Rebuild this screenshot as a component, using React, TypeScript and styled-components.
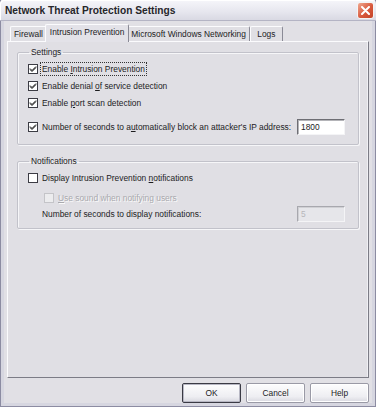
import React from 'react';
import styled, { createGlobalStyle } from 'styled-components';

const GlobalStyle = createGlobalStyle`
  html, body {
    margin: 0;
    padding: 0;
    background: #e1e0e5;
  }
  body {
    font-family: 'Liberation Sans', Arial, sans-serif;
    font-size: 8.4px;
    color: #1c1c1e;
  }
  * {
    box-sizing: border-box;
  }
`;

const Window = styled.div`
  width: 376px;
  height: 407px;
  display: flex;
  flex-direction: column;
  background: #e1e0e5;
  border: 1px solid #8c8ca2;
  border-top: none;
`;

const TitleBar = styled.div`
  height: 21px;
  flex-shrink: 0;
  display: flex;
  align-items: center;
  justify-content: space-between;
  padding: 0 2px 0 5px;
  margin: 0 -1px;
  background: linear-gradient(#f6f6fa, #e6e6ee 60%, #d9d9e3);
  border-bottom: 1px solid #b4b4c4;
  border-radius: 4px 4px 0 0;
  box-shadow: inset 1px 1px #ffffff;
`;

const Title = styled.span`
  font-size: 10.2px;
  font-weight: 700;
  color: #26262a;
`;

const CloseButton = styled.div`
  width: 17px;
  height: 17px;
  border-radius: 3px;
  border: 1px solid #f4f4f4;
  background: linear-gradient(135deg, #f0a890, #d8583c 55%, #c44428);
  display: flex;
  align-items: center;
  justify-content: center;
`;

const Client = styled.div`
  flex: 1;
  display: flex;
  flex-direction: column;
  border: 3px solid #d6d6e0;
  border-top: none;
  padding: 3px 0 0 3px;
`;

const TabStrip = styled.div`
  height: 17px;
  flex-shrink: 0;
  display: flex;
  align-items: flex-end;
  padding-left: 3px;
  position: relative;
  z-index: 1;
`;

const Tab = styled.div<{ $active?: boolean }>`
  height: ${(p) => (p.$active ? '18px' : '15px')};
  min-width: 33px;
  margin: ${(p) => (p.$active ? '0 -2px -1px' : '0')};
  padding: ${(p) => (p.$active ? '2px 4px 0' : '2px 3px 0')};
  background: ${(p) => (p.$active ? '#e3e2e8' : '#e0dfe4')};
  border-top: 1px solid #fbfbfd;
  border-left: 1px solid #fbfbfd;
  border-right: 1px solid #8a8a96;
  border-radius: 2px 2px 0 0;
  text-align: center;
  white-space: nowrap;
  z-index: ${(p) => (p.$active ? 2 : 1)};
`;

const Panel = styled.div`
  flex: 1;
  display: flex;
  flex-direction: column;
  background: #e0dfe4;
  border: 1px solid;
  border-color: #fbfbfd #7c7c86 #7c7c86 #fbfbfd;
  box-shadow: inset -6px 0 0 -5px #f0f0f4;
  padding: 5px 9px 0 9px;
  margin-right: 3px;
`;

const GroupBox = styled.fieldset<{ $gap?: number }>`
  margin: ${(p) => p.$gap ?? 0}px 0 0 0;
  padding: 3px 13px ${(p) => (p.$gap ? 6 : 8)}px 10px;
  border: 1px solid #c2c2ca;
  border-radius: 2px;
  box-shadow: 1px 1px 0 #f6f6f8, inset 1px 1px 0 #f6f6f8;
  min-width: 0;
`;

const Legend = styled.legend`
  padding: 0 2px;
  margin-left: 1px;
  line-height: 10px;
  color: #1c1c1e;
`;

const Row = styled.div<{ $h: number; $top?: number; $indent?: number }>`
  height: ${(p) => p.$h}px;
  margin-top: ${(p) => p.$top ?? 0}px;
  padding-left: ${(p) => p.$indent ?? 0}px;
  display: flex;
  align-items: center;
  justify-content: space-between;
`;

const Label = styled.label<{ $disabled?: boolean }>`
  display: flex;
  align-items: center;
  gap: 2px;
  color: ${(p) => (p.$disabled ? '#a9a9ae' : '#1c1c1e')};
  text-shadow: ${(p) => (p.$disabled ? '1px 1px 0 #fafafa' : 'none')};
  white-space: nowrap;
`;

const LabelText = styled.span<{ $focused?: boolean }>`
  padding: 1px 1px;
  border: 1px dotted ${(p) => (p.$focused ? '#333' : 'transparent')};
  line-height: 10px;
`;

const Box = styled.span<{ $disabled?: boolean }>`
  width: 10px;
  height: 10px;
  flex-shrink: 0;
  border: 1px solid ${(p) => (p.$disabled ? '#c4c4c8' : '#3c3c44')};
  background: ${(p) => (p.$disabled ? '#ececee' : '#ffffff')};
  display: flex;
  align-items: center;
  justify-content: center;
`;

const NumberField = styled.div<{ $disabled?: boolean }>`
  width: 48px;
  height: 16px;
  padding: 2px 3px;
  line-height: 10px;
  background: ${(p) => (p.$disabled ? '#e6e6ea' : '#ffffff')};
  color: ${(p) => (p.$disabled ? '#b6b6ba' : '#1c1c1e')};
  border: 1px solid;
  border-color: ${(p) =>
    p.$disabled ? '#a8a8ae #f4f4f6 #f4f4f6 #a8a8ae' : '#6e6e74 #f4f4f6 #f4f4f6 #6e6e74'};
  box-shadow: inset 1px 1px 0 ${(p) => (p.$disabled ? '#d0d0d4' : '#b4b4b8')};
`;

const ButtonRow = styled.div`
  height: 20px;
  margin: 5px 3px 0 0;
  flex-shrink: 0;
  display: flex;
  justify-content: flex-end;
  gap: 5px;
`;

const Button = styled.div<{ $default?: boolean }>`
  width: 59px;
  height: 20px;
  display: flex;
  align-items: center;
  justify-content: center;
  border: 1px solid ${(p) => (p.$default ? '#3a3a44' : '#9a9aa6')};
  border-radius: 2px;
  background: linear-gradient(#fdfdfe, #eeeef2 70%, #d8d8e0);
  box-shadow: ${(p) => (p.$default ? 'inset 0 0 0 1px #b8b8c4' : 'inset 0 0 0 1px #ffffff')};
  color: #1c1c1e;
`;

const Check = ({ checked, disabled }: { checked?: boolean; disabled?: boolean }) => (
  <Box $disabled={disabled}>
    {checked && (
      <svg width="8" height="8" viewBox="0 0 8 8">
        <path d="M1 3.5 L3 5.5 L7 1.5 M1 4.5 L3 6.5 L7 2.5" stroke="#111" strokeWidth="1" fill="none" />
      </svg>
    )}
  </Box>
);

const App: React.FC = () => {
  return (
    <>
      <GlobalStyle />
      <Window>
        <TitleBar>
          <Title>Network Threat Protection Settings</Title>
          <CloseButton>
            <svg width="9" height="9" viewBox="0 0 9 9">
              <path d="M1 1 L8 8 M8 1 L1 8" stroke="#ffffff" strokeWidth="2" strokeLinecap="round" />
            </svg>
          </CloseButton>
        </TitleBar>
        <Client>
          <TabStrip>
            <Tab>Firewall</Tab>
            <Tab $active>Intrusion Prevention</Tab>
            <Tab>Microsoft Windows Networking</Tab>
            <Tab>Logs</Tab>
          </TabStrip>
          <Panel>
            <GroupBox>
              <Legend>Settings</Legend>
              <Row $h={17}>
                <Label>
                  <Check checked />
                  <LabelText $focused>
                    Enable <u>I</u>ntrusion Prevention
                  </LabelText>
                </Label>
              </Row>
              <Row $h={17}>
                <Label>
                  <Check checked />
                  <LabelText>
                    Enable denial <u>o</u>f service detection
                  </LabelText>
                </Label>
              </Row>
              <Row $h={17}>
                <Label>
                  <Check checked />
                  <LabelText>
                    Enable <u>p</u>ort scan detection
                  </LabelText>
                </Label>
              </Row>
              <Row $h={18} $top={7}>
                <Label>
                  <Check checked />
                  <LabelText>
                    Number of seconds to a<u>u</u>tomatically block an attacker's IP address:
                  </LabelText>
                </Label>
                <NumberField>1800</NumberField>
              </Row>
            </GroupBox>
            <GroupBox $gap={11}>
              <Legend>Notifications</Legend>
              <Row $h={18}>
                <Label>
                  <Check />
                  <LabelText>
                    Display Intrusion Prevention <u>n</u>otifications
                  </LabelText>
                </Label>
              </Row>
              <Row $h={17} $top={2} $indent={16}>
                <Label $disabled>
                  <Check disabled />
                  <LabelText>
                    <u>U</u>se sound when notifying users
                  </LabelText>
                </Label>
              </Row>
              <Row $h={16} $indent={12}>
                <Label>
                  <LabelText>Number of seconds to display notifications:</LabelText>
                </Label>
                <NumberField $disabled>5</NumberField>
              </Row>
            </GroupBox>
          </Panel>
          <ButtonRow>
            <Button $default>OK</Button>
            <Button>Cancel</Button>
            <Button>Help</Button>
          </ButtonRow>
        </Client>
      </Window>
    </>
  );
};

export default App;
